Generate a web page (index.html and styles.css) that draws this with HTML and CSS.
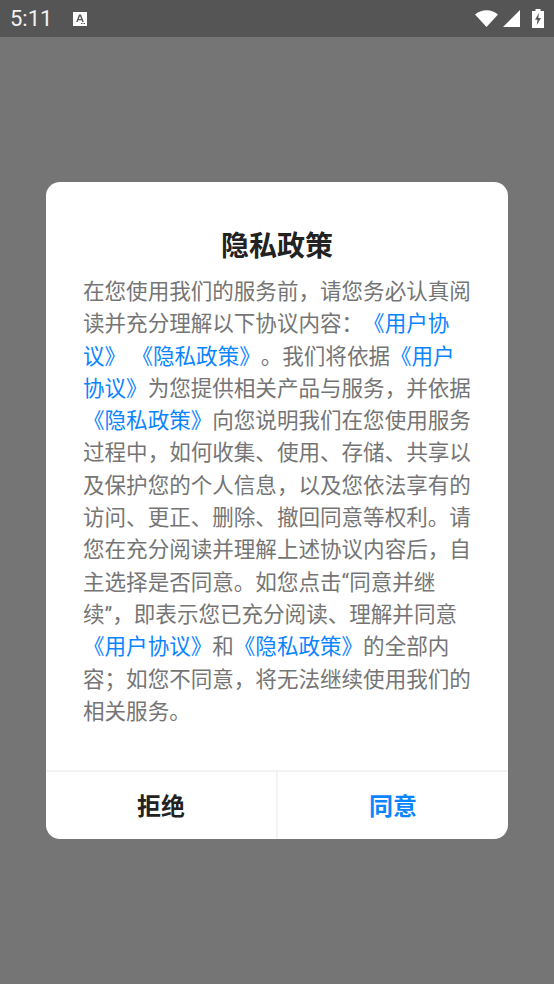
FILE: index.html
```html
<!DOCTYPE html>
<html lang="zh-CN">
<head>
    <meta charset="UTF-8">
    <meta name="viewport" content="width=device-width, initial-scale=1.0">
    <title>隐私政策</title>
    <link rel="stylesheet" href="styles.css">
</head>
<body>
    <div class="status-bar">
        <div class="status-left">
            <span class="time">5:11</span>
            <svg class="notify-icon" width="16" height="16" viewBox="0 0 16 16">
                <path fill="#fff" fill-rule="evenodd" d="M1 1h14v14H1zM7 3.500 4.200 11h1.500l.6-1.700h3.400l.6 1.700h1.500L9 3.500zM6.800 8 8 4.900 9.200 8zM9 12h1v1H9zm1.500 0h1v1h-1zm1.500 0h1v1h-1z"/>
            </svg>
        </div>
        <div class="status-right">
            <svg class="wifi-icon" width="23" height="17" viewBox="0 0 23 17"><path fill="#fff" d="M0 4.500C3 1.800 7 .2 11.500.2S20 1.800 23 4.500L11.500 17z"/></svg>
            <svg class="signal-icon" width="17" height="17" viewBox="0 0 17 17"><path fill="#fff" d="M17 0V17H0z"/></svg>
            <svg class="battery-icon" width="12" height="19" viewBox="0 0 12 19"><path fill="#fff" fill-rule="evenodd" d="M3.500 0h5v2H12v17H0V2h3.500zM7 4 3 10.800h2.500L4.700 16l4.300-7H6.300z"/></svg>
        </div>
    </div>
    <div class="overlay">
        <div class="dialog">
            <h1 class="dialog-title">隐私政策</h1>
            <p class="dialog-text">在您使用我们的服务前，请您务必认真阅读并充分理解以下协议内容：<a>《用户协议》</a> <a>《隐私政策》</a>。我们将依据<a>《用户协议》</a>为您提供相关产品与服务，并依据<a>《隐私政策》</a>向您说明我们在您使用服务过程中，如何收集、使用、存储、共享以及保护您的个人信息，以及您依法享有的访问、更正、删除、撤回同意等权利。请您在充分阅读并理解上述协议内容后，自主选择是否同意。如您点击“同意并继续”，即表示您已充分阅读、理解并同意<a>《用户协议》</a>和<a>《隐私政策》</a>的全部内容；如您不同意，将无法继续使用我们的相关服务。</p>
            <div class="dialog-actions">
                <button class="action-btn">拒绝</button>
                <button class="action-btn agree">同意</button>
            </div>
        </div>
    </div>
</body>
</html>
```

FILE: styles.css
```css
html, body {
    height: 100%;
}
body {
    margin: 0;
    padding: 0;
    display: flex;
    flex-direction: column;
    background-color: #757575;
    font-family: "Noto Sans CJK SC", "Noto Sans", sans-serif;
    overflow: hidden;
}
.status-bar {
    display: flex;
    align-items: center;
    justify-content: space-between;
    height: 37px;
    padding: 0 10px;
    background-color: #555555;
    color: #ffffff;
}
.status-left {
    display: flex;
    align-items: center;
    gap: 20px;
}
.time {
    font-family: Roboto, sans-serif;
    font-size: 22px;
    color: #f2f2f2;
}
.notify-icon {
    display: block;
}
.status-right {
    display: flex;
    align-items: center;
}
.status-right svg {
    display: block;
}
.signal-icon {
    margin-left: 5px;
}
.battery-icon {
    margin-left: 12px;
}
.overlay {
    flex: 1;
    padding: 145px 46px 0;
}
.dialog {
    display: flex;
    flex-direction: column;
    height: 657px;
    background-color: #ffffff;
    border-radius: 14px;
    overflow: hidden;
}
.dialog-title {
    margin: 42px 0 0;
    font-size: 28px;
    line-height: 40px;
    font-weight: 700;
    color: #222222;
    text-align: center;
}
.dialog-text {
    flex: 1;
    margin: 0;
    padding: 12px 36px 0 37px;
    font-family: Roboto, "Noto Sans CJK SC", sans-serif;
    font-size: 21.56px;
    line-height: 32.3px;
    text-spacing-trim: space-all;
    color: #757575;
}
.dialog-text a {
    color: #0a84ff;
}
.dialog-actions {
    display: flex;
    height: 67px;
    border-top: 2px solid #f3f3f3;
}
.action-btn {
    flex: 1;
    padding: 0 0 2px;
    border: none;
    background: none;
    font-family: inherit;
    font-size: 24px;
    font-weight: 700;
    color: #222222;
}
.action-btn.agree {
    border-left: 2px solid #f3f3f3;
    color: #0a84ff;
}
```
